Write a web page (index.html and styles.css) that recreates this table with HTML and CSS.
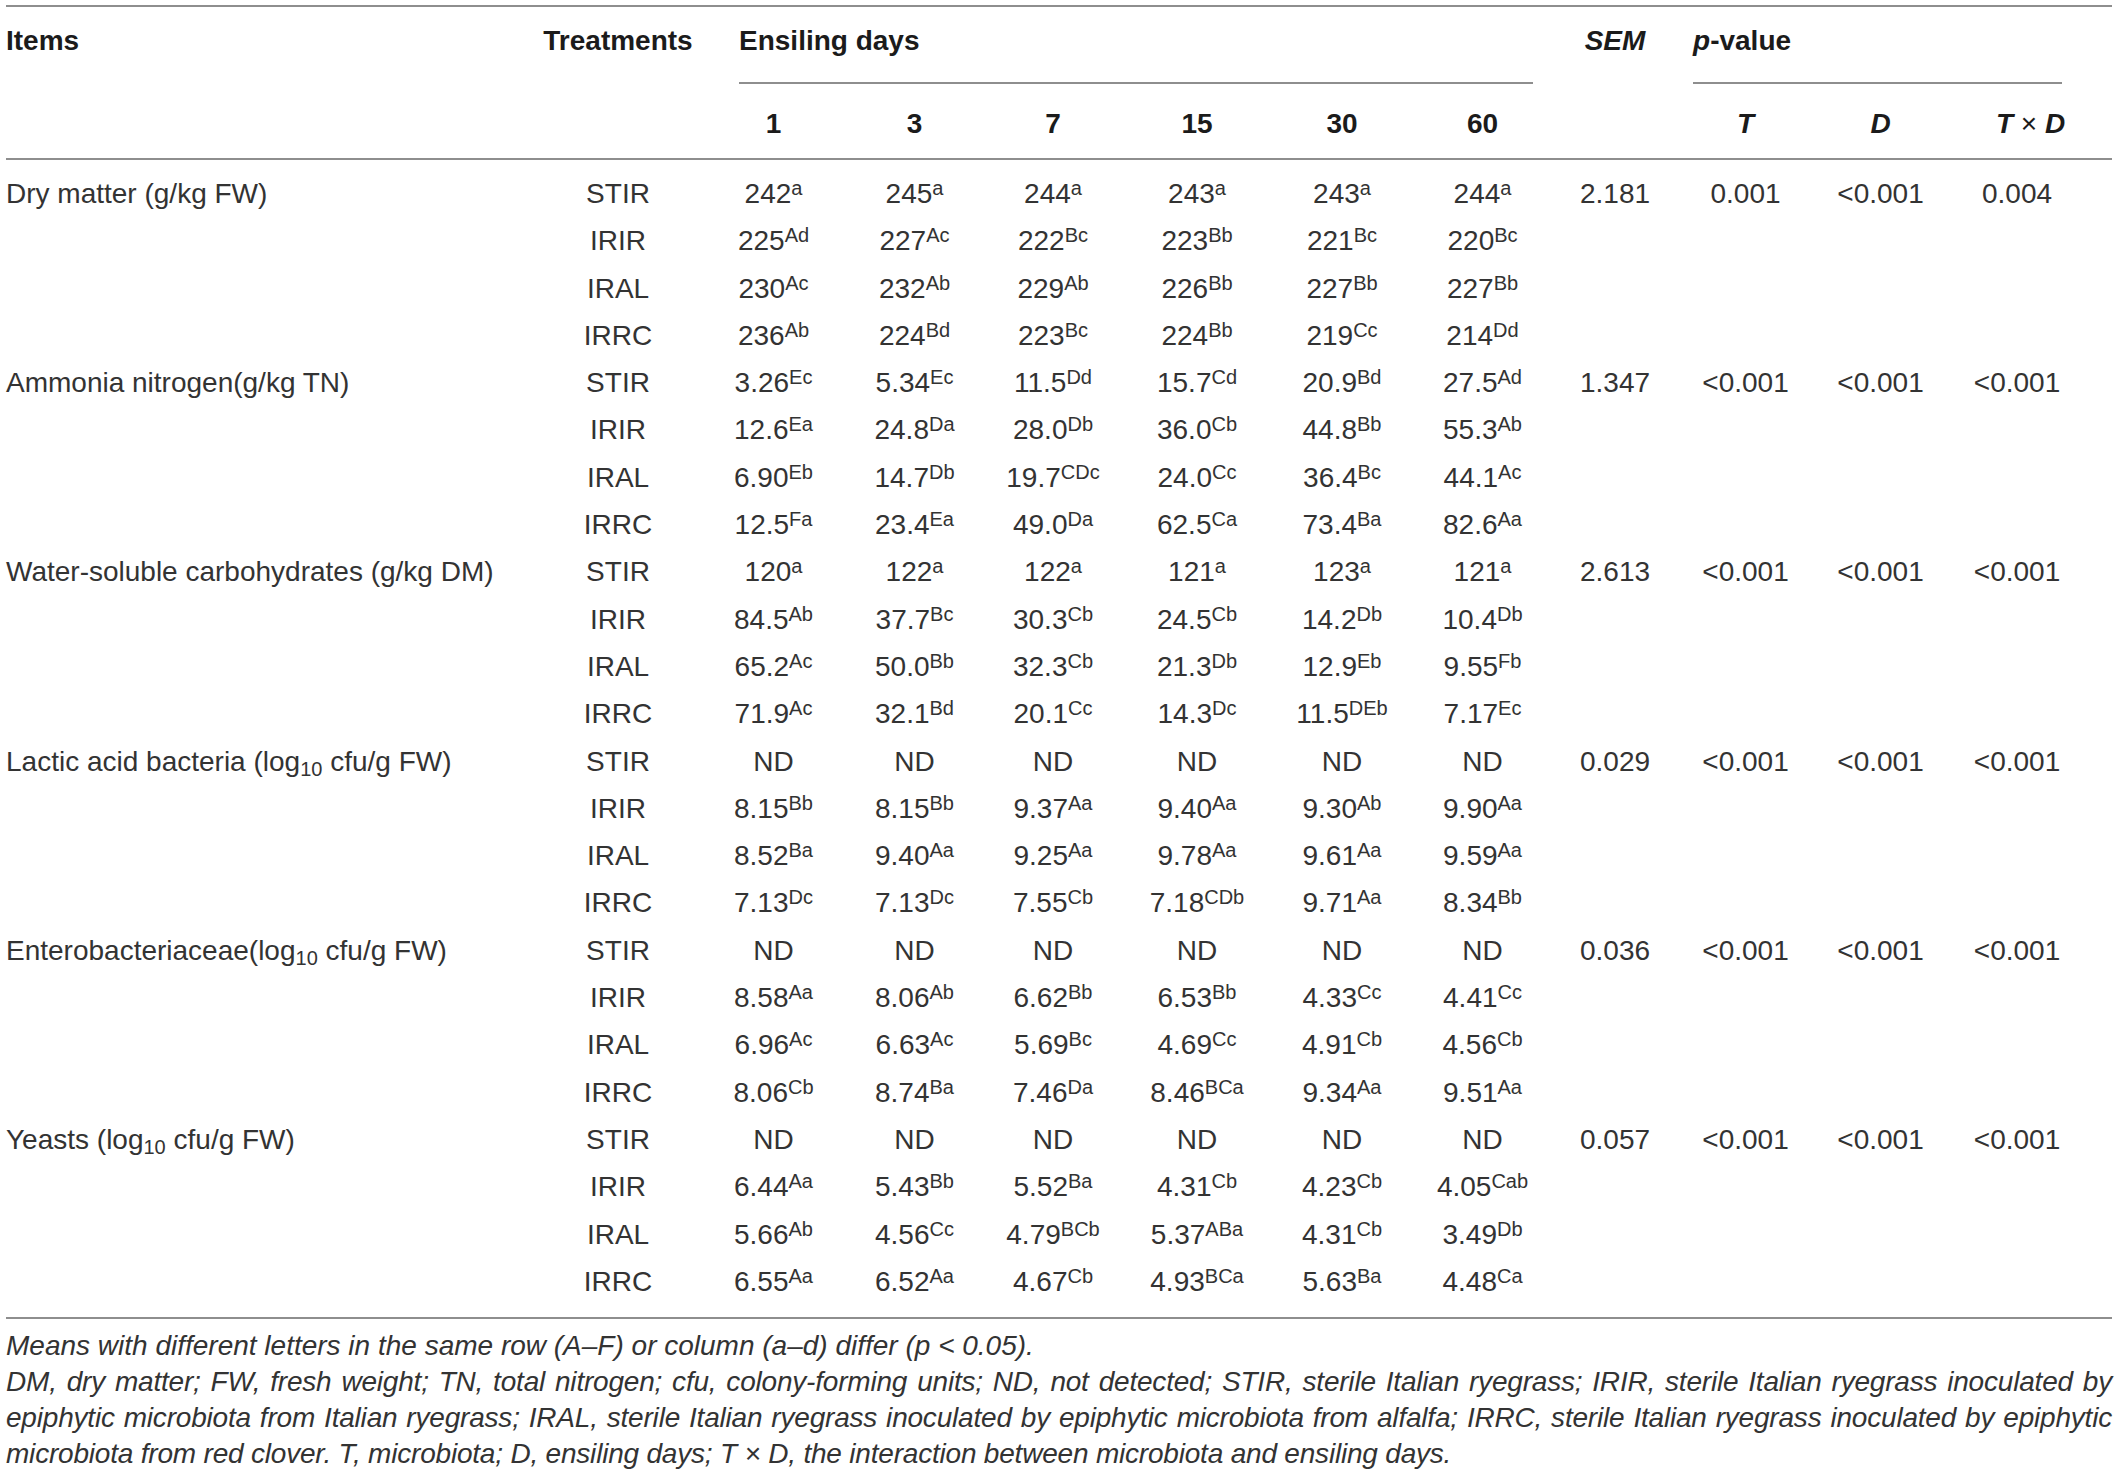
FILE: index.html
```html
<!DOCTYPE html>
<html lang="en">
<head>
  <meta charset="UTF-8">
  <title>Fermentation characteristics and microbial counts</title>
  <link rel="stylesheet" href="styles.css">
</head>
<body>

  <div class="table-wrap">
    <table class="data-table">
      <colgroup>
        <col class="c-items">
        <col class="c-treat">
        <col class="c-d1">
        <col class="c-d3">
        <col class="c-d7">
        <col class="c-d15">
        <col class="c-d30">
        <col class="c-d60">
        <col class="c-sem">
        <col class="c-t">
        <col class="c-d">
        <col class="c-td">
      </colgroup>
      <thead>
        <tr>
          <th class="top items-head" rowspan="2">Items</th>
          <th class="top" rowspan="2">Treatments</th>
          <th class="group" colspan="6"><div class="group-days">Ensiling days</div></th>
          <th class="top" rowspan="2"><i>SEM</i></th>
          <th class="group" colspan="3"><div class="group-p"><i>p</i>-value</div></th>
        </tr>
        <tr>
          <th class="sub">1</th>
          <th class="sub">3</th>
          <th class="sub">7</th>
          <th class="sub">15</th>
          <th class="sub">30</th>
          <th class="sub">60</th>
          <th class="sub"><i>T</i></th>
          <th class="sub"><i>D</i></th>
          <th class="sub last-col"><i>T</i> <span class="times">&times;</span> <i>D</i></th>
        </tr>
      </thead>
      <tbody>
        <!-- Dry matter -->
        <tr class="first">
          <td class="item">Dry matter (g/kg FW)</td>
          <td>STIR</td>
          <td>242<sup>a</sup></td><td>245<sup>a</sup></td><td>244<sup>a</sup></td><td>243<sup>a</sup></td><td>243<sup>a</sup></td><td>244<sup>a</sup></td>
          <td>2.181</td><td>0.001</td><td>&lt;0.001</td><td class="last-col">0.004</td>
        </tr>
        <tr>
          <td class="item"></td><td>IRIR</td>
          <td>225<sup>Ad</sup></td><td>227<sup>Ac</sup></td><td>222<sup>Bc</sup></td><td>223<sup>Bb</sup></td><td>221<sup>Bc</sup></td><td>220<sup>Bc</sup></td>
          <td></td><td></td><td></td><td class="last-col"></td>
        </tr>
        <tr>
          <td class="item"></td><td>IRAL</td>
          <td>230<sup>Ac</sup></td><td>232<sup>Ab</sup></td><td>229<sup>Ab</sup></td><td>226<sup>Bb</sup></td><td>227<sup>Bb</sup></td><td>227<sup>Bb</sup></td>
          <td></td><td></td><td></td><td class="last-col"></td>
        </tr>
        <tr>
          <td class="item"></td><td>IRRC</td>
          <td>236<sup>Ab</sup></td><td>224<sup>Bd</sup></td><td>223<sup>Bc</sup></td><td>224<sup>Bb</sup></td><td>219<sup>Cc</sup></td><td>214<sup>Dd</sup></td>
          <td></td><td></td><td></td><td class="last-col"></td>
        </tr>

        <!-- Ammonia nitrogen -->
        <tr>
          <td class="item">Ammonia nitrogen(g/kg TN)</td><td>STIR</td>
          <td>3.26<sup>Ec</sup></td><td>5.34<sup>Ec</sup></td><td>11.5<sup>Dd</sup></td><td>15.7<sup>Cd</sup></td><td>20.9<sup>Bd</sup></td><td>27.5<sup>Ad</sup></td>
          <td>1.347</td><td>&lt;0.001</td><td>&lt;0.001</td><td class="last-col">&lt;0.001</td>
        </tr>
        <tr>
          <td class="item"></td><td>IRIR</td>
          <td>12.6<sup>Ea</sup></td><td>24.8<sup>Da</sup></td><td>28.0<sup>Db</sup></td><td>36.0<sup>Cb</sup></td><td>44.8<sup>Bb</sup></td><td>55.3<sup>Ab</sup></td>
          <td></td><td></td><td></td><td class="last-col"></td>
        </tr>
        <tr>
          <td class="item"></td><td>IRAL</td>
          <td>6.90<sup>Eb</sup></td><td>14.7<sup>Db</sup></td><td>19.7<sup>CDc</sup></td><td>24.0<sup>Cc</sup></td><td>36.4<sup>Bc</sup></td><td>44.1<sup>Ac</sup></td>
          <td></td><td></td><td></td><td class="last-col"></td>
        </tr>
        <tr>
          <td class="item"></td><td>IRRC</td>
          <td>12.5<sup>Fa</sup></td><td>23.4<sup>Ea</sup></td><td>49.0<sup>Da</sup></td><td>62.5<sup>Ca</sup></td><td>73.4<sup>Ba</sup></td><td>82.6<sup>Aa</sup></td>
          <td></td><td></td><td></td><td class="last-col"></td>
        </tr>

        <!-- Water-soluble carbohydrates -->
        <tr>
          <td class="item">Water-soluble carbohydrates (g/kg DM)</td><td>STIR</td>
          <td>120<sup>a</sup></td><td>122<sup>a</sup></td><td>122<sup>a</sup></td><td>121<sup>a</sup></td><td>123<sup>a</sup></td><td>121<sup>a</sup></td>
          <td>2.613</td><td>&lt;0.001</td><td>&lt;0.001</td><td class="last-col">&lt;0.001</td>
        </tr>
        <tr>
          <td class="item"></td><td>IRIR</td>
          <td>84.5<sup>Ab</sup></td><td>37.7<sup>Bc</sup></td><td>30.3<sup>Cb</sup></td><td>24.5<sup>Cb</sup></td><td>14.2<sup>Db</sup></td><td>10.4<sup>Db</sup></td>
          <td></td><td></td><td></td><td class="last-col"></td>
        </tr>
        <tr>
          <td class="item"></td><td>IRAL</td>
          <td>65.2<sup>Ac</sup></td><td>50.0<sup>Bb</sup></td><td>32.3<sup>Cb</sup></td><td>21.3<sup>Db</sup></td><td>12.9<sup>Eb</sup></td><td>9.55<sup>Fb</sup></td>
          <td></td><td></td><td></td><td class="last-col"></td>
        </tr>
        <tr>
          <td class="item"></td><td>IRRC</td>
          <td>71.9<sup>Ac</sup></td><td>32.1<sup>Bd</sup></td><td>20.1<sup>Cc</sup></td><td>14.3<sup>Dc</sup></td><td>11.5<sup>DEb</sup></td><td>7.17<sup>Ec</sup></td>
          <td></td><td></td><td></td><td class="last-col"></td>
        </tr>

        <!-- Lactic acid bacteria -->
        <tr>
          <td class="item">Lactic acid bacteria (log<sub>10</sub> cfu/g FW)</td><td>STIR</td>
          <td>ND</td><td>ND</td><td>ND</td><td>ND</td><td>ND</td><td>ND</td>
          <td>0.029</td><td>&lt;0.001</td><td>&lt;0.001</td><td class="last-col">&lt;0.001</td>
        </tr>
        <tr>
          <td class="item"></td><td>IRIR</td>
          <td>8.15<sup>Bb</sup></td><td>8.15<sup>Bb</sup></td><td>9.37<sup>Aa</sup></td><td>9.40<sup>Aa</sup></td><td>9.30<sup>Ab</sup></td><td>9.90<sup>Aa</sup></td>
          <td></td><td></td><td></td><td class="last-col"></td>
        </tr>
        <tr>
          <td class="item"></td><td>IRAL</td>
          <td>8.52<sup>Ba</sup></td><td>9.40<sup>Aa</sup></td><td>9.25<sup>Aa</sup></td><td>9.78<sup>Aa</sup></td><td>9.61<sup>Aa</sup></td><td>9.59<sup>Aa</sup></td>
          <td></td><td></td><td></td><td class="last-col"></td>
        </tr>
        <tr>
          <td class="item"></td><td>IRRC</td>
          <td>7.13<sup>Dc</sup></td><td>7.13<sup>Dc</sup></td><td>7.55<sup>Cb</sup></td><td>7.18<sup>CDb</sup></td><td>9.71<sup>Aa</sup></td><td>8.34<sup>Bb</sup></td>
          <td></td><td></td><td></td><td class="last-col"></td>
        </tr>

        <!-- Enterobacteriaceae -->
        <tr>
          <td class="item">Enterobacteriaceae(log<sub>10</sub> cfu/g FW)</td><td>STIR</td>
          <td>ND</td><td>ND</td><td>ND</td><td>ND</td><td>ND</td><td>ND</td>
          <td>0.036</td><td>&lt;0.001</td><td>&lt;0.001</td><td class="last-col">&lt;0.001</td>
        </tr>
        <tr>
          <td class="item"></td><td>IRIR</td>
          <td>8.58<sup>Aa</sup></td><td>8.06<sup>Ab</sup></td><td>6.62<sup>Bb</sup></td><td>6.53<sup>Bb</sup></td><td>4.33<sup>Cc</sup></td><td>4.41<sup>Cc</sup></td>
          <td></td><td></td><td></td><td class="last-col"></td>
        </tr>
        <tr>
          <td class="item"></td><td>IRAL</td>
          <td>6.96<sup>Ac</sup></td><td>6.63<sup>Ac</sup></td><td>5.69<sup>Bc</sup></td><td>4.69<sup>Cc</sup></td><td>4.91<sup>Cb</sup></td><td>4.56<sup>Cb</sup></td>
          <td></td><td></td><td></td><td class="last-col"></td>
        </tr>
        <tr>
          <td class="item"></td><td>IRRC</td>
          <td>8.06<sup>Cb</sup></td><td>8.74<sup>Ba</sup></td><td>7.46<sup>Da</sup></td><td>8.46<sup>BCa</sup></td><td>9.34<sup>Aa</sup></td><td>9.51<sup>Aa</sup></td>
          <td></td><td></td><td></td><td class="last-col"></td>
        </tr>

        <!-- Yeasts -->
        <tr>
          <td class="item">Yeasts (log<sub>10</sub> cfu/g FW)</td><td>STIR</td>
          <td>ND</td><td>ND</td><td>ND</td><td>ND</td><td>ND</td><td>ND</td>
          <td>0.057</td><td>&lt;0.001</td><td>&lt;0.001</td><td class="last-col">&lt;0.001</td>
        </tr>
        <tr>
          <td class="item"></td><td>IRIR</td>
          <td>6.44<sup>Aa</sup></td><td>5.43<sup>Bb</sup></td><td>5.52<sup>Ba</sup></td><td>4.31<sup>Cb</sup></td><td>4.23<sup>Cb</sup></td><td>4.05<sup>Cab</sup></td>
          <td></td><td></td><td></td><td class="last-col"></td>
        </tr>
        <tr>
          <td class="item"></td><td>IRAL</td>
          <td>5.66<sup>Ab</sup></td><td>4.56<sup>Cc</sup></td><td>4.79<sup>BCb</sup></td><td>5.37<sup>ABa</sup></td><td>4.31<sup>Cb</sup></td><td>3.49<sup>Db</sup></td>
          <td></td><td></td><td></td><td class="last-col"></td>
        </tr>
        <tr class="last">
          <td class="item"></td><td>IRRC</td>
          <td>6.55<sup>Aa</sup></td><td>6.52<sup>Aa</sup></td><td>4.67<sup>Cb</sup></td><td>4.93<sup>BCa</sup></td><td>5.63<sup>Ba</sup></td><td>4.48<sup>Ca</sup></td>
          <td></td><td></td><td></td><td class="last-col"></td>
        </tr>
      </tbody>
    </table>

    <div class="footnote">
      <p>Means with different letters in the same row (A&ndash;F) or column (a&ndash;d) differ (p &lt; 0.05).</p>
      <p class="justified">DM, dry matter; FW, fresh weight; TN, total nitrogen; cfu, colony-forming units; ND, not detected; STIR, sterile Italian ryegrass; IRIR, sterile Italian ryegrass inoculated by epiphytic microbiota from Italian ryegrass; IRAL, sterile Italian ryegrass inoculated by epiphytic microbiota from alfalfa; IRRC, sterile Italian ryegrass inoculated by epiphytic microbiota from red clover. T, microbiota; D, ensiling days; T &times; D, the interaction between microbiota and ensiling days.</p>
    </div>
  </div>

</body>
</html>
```

FILE: styles.css
```css
* {
  margin: 0;
  padding: 0;
  box-sizing: border-box;
}

body {
  background: #fff;
  color: #333;
  font-family: 'Liberation Sans', Arial, sans-serif;
  font-size: 28px;
}

.table-wrap {
  padding: 5px 7px 0 6px;
}

/* table */

.data-table {
  width: 2106px;
  table-layout: fixed;
  border-collapse: separate;
  border-spacing: 0;
  border-top: 2px solid #8e8e8e;
}

.c-items { width: 530px; }
.c-treat { width: 164px; }
.c-d1    { width: 147px; }
.c-d3    { width: 135px; }
.c-d7    { width: 142px; }
.c-d15   { width: 146px; }
.c-d30   { width: 144px; }
.c-d60   { width: 137px; }
.c-sem   { width: 128px; }
.c-t     { width: 133px; }
.c-d     { width: 137px; }
.c-td    { width: 163px; }

.data-table th {
  font-weight: bold;
  color: #1b1b1b;
  line-height: 40px;
  text-align: center;
  white-space: nowrap;
}

.data-table th.top {
  vertical-align: top;
  padding-top: 14px;
  border-bottom: 2px solid #8e8e8e;
}

.data-table th.items-head {
  text-align: left;
}

.data-table th.group {
  padding: 0;
  text-align: left;
  vertical-align: top;
}

.group-days,
.group-p {
  padding: 14px 0 21px;
  border-bottom: 2px solid #8e8e8e;
}

.group-days {
  margin: 0 18px 0 39px;
}

.group-p {
  margin: 0 50px 0 14px;
}

.data-table th.sub {
  padding: 20px 0 14px;
  border-bottom: 2px solid #8e8e8e;
}

.times {
  font-weight: normal;
  font-style: normal;
}

.data-table .last-col {
  padding-right: 27px;
}

.data-table td {
  line-height: 47.3px;
  text-align: center;
  white-space: nowrap;
  padding-top: 0;
  padding-bottom: 0;
}

.data-table td.item {
  text-align: left;
}

.data-table tr.first td {
  padding-top: 10px;
}

.data-table tr.last td {
  padding-bottom: 12px;
  border-bottom: 2px solid #8e8e8e;
}

sup {
  font-size: 20px;
  line-height: 0;
  vertical-align: 8px;
}

sub {
  font-size: 20px;
  line-height: 0;
  vertical-align: -5px;
}

/* footnote */

.footnote {
  margin-top: 9px;
  font-style: italic;
  line-height: 35.8px;
}

.footnote .justified {
  text-align: justify;
  letter-spacing: -0.2px;
}
```
